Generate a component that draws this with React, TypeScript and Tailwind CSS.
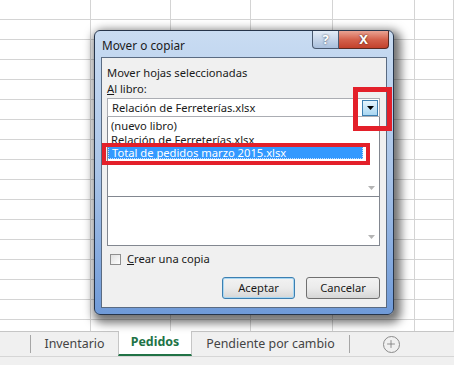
import { Plus } from 'lucide-react'

const COLS = [91, 80, 80, 82, 82, 39]
const ROWS = 16

function SheetGrid() {
  return (
    <div className="h-[331px] overflow-hidden bg-white">
      {Array.from({ length: ROWS + 1 }).map((_, r) => (
        <div key={r} className="flex h-[20px]">
          {COLS.map((w, c) => (
            <div
              key={c}
              style={{ width: w }}
              className="h-[20px] shrink-0 border-b border-r border-[#d4d4d4]"
            />
          ))}
        </div>
      ))}
    </div>
  )
}

function ScrollArrow() {
  return (
    <svg width="7" height="4" viewBox="0 0 7 4" className="block">
      <path d="M0 0h7L3.5 4z" fill="#b4b4b4" />
    </svg>
  )
}

function Dialog() {
  return (
    <div className="absolute left-[94px] top-[30px] w-[300px] h-[285px] rounded-[6px] border border-[#26354b] bg-gradient-to-b from-[#c9dcf2] via-[#a9c4e8] to-[#6f9ad8] shadow-[3px_4px_10px_4px_rgba(0,0,0,0.55)] px-[6px] pb-[6px] flex flex-col">
      {/* title bar */}
      <div className="h-[26px] flex items-start justify-between shrink-0">
        <span className="pt-[6px] pl-[1px] text-[11.8px] leading-[16px] text-[#1b1b1b]">Mover o copiar</span>
        <div className="flex mr-[-2px]">
          <div className="w-[27px] h-[18px] rounded-bl-[4px] border border-t-0 border-[#4a5a70] bg-gradient-to-b from-[#e3ecf7] to-[#a9bfdc] flex items-center justify-center text-[13px] font-bold text-white [text-shadow:0_0_2px_#2c3a4e] leading-none">
            ?
          </div>
          <div className="w-[50px] h-[18px] rounded-br-[4px] border border-t-0 border-l-0 border-[#5a2a22] bg-gradient-to-b from-[#e9a393] via-[#d4614c] to-[#c2412c] flex items-center justify-center text-[13px] font-bold text-white [text-shadow:0_0_2px_#3a1610] leading-none">
            X
          </div>
        </div>
      </div>

      {/* content panel */}
      <div className="flex-1 border border-[#5a6b82] bg-[#f0f0f0] pt-[7px] px-[5px] text-[11.2px] text-[#1a1a1a] relative">
        <div className="leading-[16px]">Mover hojas seleccionadas</div>
        <div className="leading-[16px]">
          <span className="underline">A</span>l libro:
        </div>

        {/* combo */}
        <div className="mt-[1px] h-[19px] w-[273px] bg-white border border-[#abadb3] flex items-center justify-between pl-[4px] pr-[1px]">
          <span className="leading-none">Relación de Ferreterías.xlsx</span>
          <div className="w-[16px] h-[16px] border border-[#3c7fb1] bg-gradient-to-b from-[#e5f4fc] to-[#a9d7f2] flex items-center justify-center">
            <svg width="7" height="4" viewBox="0 0 7 4">
              <path d="M0 0h7L3.5 4z" fill="#000" />
            </svg>
          </div>
        </div>

        {/* drop list + list box */}
        <div className="w-[273px] h-[129px] bg-white border border-t-0 border-[#828790] flex flex-col">
          <div className="h-[80px] border-b border-[#828790] flex">
            <div className="flex-1 pt-[2px]">
              <div className="h-[14px] leading-[14px] pl-[3px]">(nuevo libro)</div>
              <div className="h-[13px] leading-[13px] pl-[3px] overflow-hidden">Relación de Ferreterías.xlsx</div>
              <div className="h-[13px] leading-[11px] pl-[3px] bg-[#3399ff] text-white border border-dotted border-[#c5e0ff]">
                Total de pedidos marzo 2015.xlsx
              </div>
            </div>
            <div className="w-[16px] flex flex-col justify-end items-center pb-[6px]">
              <ScrollArrow />
            </div>
          </div>
          <div className="flex-1 flex justify-end">
            <div className="w-[16px] flex flex-col justify-end items-center pb-[6px]">
              <ScrollArrow />
            </div>
          </div>
        </div>

        {/* checkbox */}
        <div className="mt-[6px] flex items-center gap-[6px] pl-[3px] h-[14px]">
          <div className="w-[11px] h-[11px] border border-[#8f8f8f] bg-gradient-to-br from-[#e0e0e0] to-[#ffffff]" />
          <span className="leading-none">
            <span className="underline">C</span>rear una copia
          </span>
        </div>

        {/* buttons */}
        <div className="mt-[11px] flex justify-end gap-[11px] pr-[1px]">
          <button className="w-[73px] h-[22px] rounded-[3px] border border-[#3c7fb1] bg-gradient-to-b from-[#f2f2f2] via-[#ebebeb] to-[#d6d6d6] shadow-[inset_0_0_0_1px_#a9d7f2] text-[11.2px] leading-none">
            Aceptar
          </button>
          <button className="w-[74px] h-[22px] rounded-[3px] border border-[#707070] bg-gradient-to-b from-[#f2f2f2] via-[#ebebeb] to-[#d6d6d6] text-[11.2px] leading-none">
            Cancelar
          </button>
        </div>

        {/* red highlight boxes */}
        <div className="absolute left-[251px] top-[29px] w-[39px] h-[44px] border-[5px] border-[#e3202a]" />
        <div className="absolute left-[0px] top-[85px] w-[268px] h-[22px] border-[4px] border-[#e3202a]" />
      </div>
    </div>
  )
}

function SheetTabs() {
  return (
    <div className="h-[34px] bg-[#f0f0f0] flex flex-col">
      <div className="h-[26px] border-t border-[#c6c6c6] border-b border-b-[#d6d6d6] flex items-stretch text-[12.4px] text-[#444]">
        <div className="w-[30px]" />
        <div className="my-[3px] w-px bg-[#a6a6a6]" />
        <div className="w-[87px] flex items-center justify-center">Inventario</div>
        <div className="w-[74px] -mt-px bg-white border-x border-[#c6c6c6] border-b-2 border-b-[#217346] flex items-center justify-center font-bold text-[#217346]">
          Pedidos
        </div>
        <div className="w-[157px] flex items-center justify-center">Pendiente por cambio</div>
        <div className="my-[3px] w-px bg-[#a6a6a6]" />
        <div className="w-[82px] flex items-center justify-center">
          <div className="w-[17px] h-[17px] rounded-full border border-[#8a8a8a] flex items-center justify-center">
            <Plus size={12} strokeWidth={1.6} color="#777" />
          </div>
        </div>
      </div>
    </div>
  )
}

export default function App() {
  return (
    <div className="relative w-[454px] h-[365px] overflow-hidden bg-white font-['Noto_Sans',sans-serif]">
      <SheetGrid />
      <SheetTabs />
      <Dialog />
    </div>
  )
}
